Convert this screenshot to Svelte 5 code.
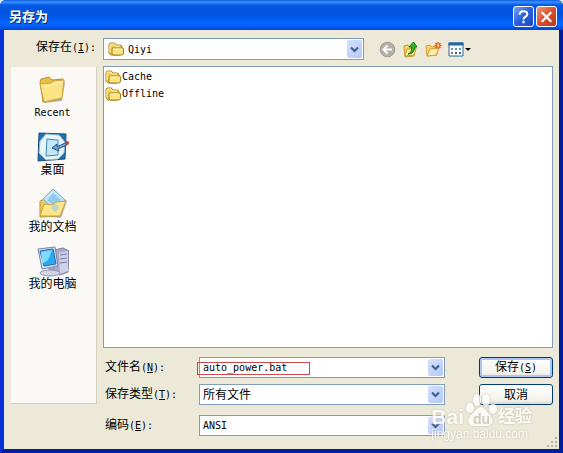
<script>
  let folders = ['Cache', 'Offline']
  let places = [
    { icon: 'recent', name: 'Recent', latin: true },
    { icon: 'desktop', name: '桌面' },
    { icon: 'documents', name: '我的文档' },
    { icon: 'computer', name: '我的电脑' }
  ]
  let filename = $state('auto_power.bat')
</script>

{#snippet folder()}
  <svg class="folder" width="16" height="16" viewBox="0 0 16 16" aria-hidden="true">
    <path d="M1 12V4q0-2 2-2h3q1 0 2 2h4q2 0 2 2v6l-2 2H3z" fill="#f0cd55" stroke="#a77d20" />
    <path d="M2 11V4q0-1 1-1h3l1 2h5" fill="none" stroke="#fff5b4" />
    <path d="M4 13V8q0-1 1-1h9q1.500 0 1.500 1v4q0 2-2 2H5z" fill="#fbe581" stroke="#a77d20" />
    <path d="M5 8h9" stroke="#fffac8" />
  </svg>
{/snippet}

{#snippet arrow()}
  <span class="arrow" aria-hidden="true">
    <svg width="9" height="7" viewBox="0 0 9 7"><path d="M1 1.500 4.500 5 8 1.500" fill="none" stroke="#42608f" stroke-width="2.200" /></svg>
  </span>
{/snippet}

<div class="window">
  <header>
    <h1>另存为</h1>
    <button class="caption help" aria-label="Help">
      <svg width="20" height="20" viewBox="0 0 20 20"><path d="M6 7.500Q6 4 10 4t4 3.200c0 2.800-4 2.600-4 5.300M10 14v2.500" fill="none" stroke="#fff" stroke-width="2.200" /></svg>
    </button>
    <button class="caption close" aria-label="Close">
      <svg width="20" height="20" viewBox="0 0 20 20"><path d="m5 5 10 10M15 5 5 15" stroke="#fff" stroke-width="2.300" /></svg>
    </button>
  </header>

  <main>
    <div class="lookin">
      <label for="where">保存在<span class="latin">(<u>I</u>):</span></label>
      <div class="combo">
        {@render folder()}
        <select id="where" class="latin"><option>Qiyi</option></select>
        {@render arrow()}
      </div>
      <div class="tools">
        <button aria-label="Back">
          <svg width="17" height="17" viewBox="0 0 17 17">
            <circle cx="8.500" cy="8.500" r="7.300" fill="#b2b1aa" stroke="#9c9b94" />
            <path d="M13 8.500H5M8.500 4.500l-4 4 4 4" fill="none" stroke="#fff" stroke-width="2" />
          </svg>
        </button>
        <button aria-label="Up one level">
          <svg width="17" height="17" viewBox="0 0 17 17">
            <path d="M2 5l4-1 1 2 6-1-1 10-9 1z" fill="#f5d967" stroke="#c59a2c" />
            <path d="m3 15 2-7 9-1-2 7z" fill="#fff09c" stroke="#c59a2c" />
            <path d="M6 13q4-1 3.500-7H7l4.500-5L15 6h-2.500q0 7-6.500 7z" fill="#37b42e" stroke="#167413" />
          </svg>
        </button>
        <button aria-label="New folder">
          <svg width="17" height="17" viewBox="0 0 17 17">
            <path d="M1 5l4-1 2 2 5-1v9L2 15z" fill="#f8d568" stroke="#d59e38" />
            <path d="m2 15 3-7 9-1-3 7z" fill="#fff0a6" stroke="#d59e38" />
            <path d="M13 1v7M9.500 4.500h7M10.500 2l5 5M15.500 2l-5 5" stroke="#e65a2c" stroke-width="1.300" />
            <circle cx="13" cy="4.500" r="1.300" fill="#ffd36a" />
          </svg>
        </button>
        <button aria-label="View menu">
          <svg width="24" height="17" viewBox="0 0 24 17">
            <path d="M1 2h14v13H1z" fill="#fff" stroke="#2365a5" />
            <path d="M.500 1.500h15v3H.500z" fill="#2365a5" />
            <path d="M3 7h2v2H3zM11 7h2v2h-2z" fill="#768fbc" />
            <path d="M7 7h2v2H7z" fill="#45a765" />
            <path d="M3 11h2v2H3z" fill="#b76161" />
            <path d="M7 11h2v2H7zM11 11h2v2h-2z" fill="#305ca0" />
            <path d="M17 7h6l-3 3z" fill="#000" />
          </svg>
        </button>
      </div>
    </div>

    <nav>
      {#each places as place}
        <button class="place">
          <svg width="32" height="32" viewBox="0 0 32 32" aria-hidden="true">
            {#if place.icon === 'recent'}
              <path d="m5 27 2 2 18-2 3-18-3-1z" fill="#77736b" opacity=".5" />
              <path d="m3 8 1-3 8-2 3 3 11-1 1 3-3 17-18 3z" fill="#e9bd47" stroke="#bd902c" />
              <path d="m3 10 11-1 3-2 10-1-2 18-18 4z" fill="#fbe486" stroke="#d1a33c" />
              <path d="m5 12 10-1 3-2 7-1" fill="none" stroke="#fff7c7" />
            {:else if place.icon === 'desktop'}
              <path d="m2 2 27 1-1 25-27 2z" fill="#246fae" stroke="#174b82" />
              <path d="m9 3 13 1 6 7-1 11-6 6-12 1-7-7 1-12z" fill="#e9f4f7" stroke="#88b9d8" />
              <path d="m10 8 11 1v15l-12 1z" fill="#c4e7fa" stroke="#3989bf" />
              <path d="m15 17 5-4v3l8-4 2 2-9 4 1 2z" fill="#68a8dc" stroke="#28588a" />
              <circle cx="30" cy="12" r="2" fill="#b74340" />
            {:else if place.icon === 'documents'}
              <path d="m5 28 19 2 6-17-3-2z" fill="#79756c" opacity=".5" />
              <path d="m3 13 7-3 14 2-1 16-20 1z" fill="#eeca59" stroke="#bc9330" />
              <path d="m16 1 12 11-9 11L6 11z" fill="#c5e6f9" stroke="#76abd0" />
              <path d="m16 5 8 7-6 7-8-7z" fill="#92c8eb" />
              <path d="m3 28 4-12 8 1 4-3 10-1-6 15z" fill="#ffe68b" stroke="#c99f3b" />
              <path d="m14 20 4-5 4 4-3 6z" fill="#9fd0dd" opacity=".7" />
            {:else}
              <path d="m17 5 9-2 6 3-1 21-8 3-7-3z" fill="#a9abc9" stroke="#7c7ea2" />
              <path d="m22 8 9-2v20l-8 3z" fill="#cdd1e8" />
              <path d="m23 10 7-1m-7 5 7-1m-7 5 7-1" stroke="#777ca3" />
              <path d="m1 4 17-2 3 19-16 3z" fill="#d7dcec" stroke="#7b84ac" />
              <path d="m3 6 13-2 3 15-12 2z" fill="#2baaf0" stroke="#266ca9" />
              <path d="m4 7 11-2-4 10-6 4z" fill="#80dbff" />
              <path d="m11 23 5-1 1 4h-5z" fill="#9da4c4" />
              <ellipse cx="13" cy="28" rx="10" ry="3" fill="#d2d5e6" stroke="#9095b6" />
            {/if}
          </svg>
          <span class:latin={place.latin}>{place.name}</span>
        </button>
      {/each}
    </nav>

    <section>
      <ul class="files latin">
        {#each folders as name}
          <li>{@render folder()}{name}</li>
        {/each}
      </ul>

      <form onsubmit={(e) => e.preventDefault()}>
        <label for="filename">文件名<span class="latin"> (<u>N</u>):</span></label>
        <div class="combo marked">
          <input id="filename" class="latin" bind:value={filename} />
          {@render arrow()}
        </div>
        <button class="action default">保存<span class="latin">(<u>S</u>)</span></button>

        <label for="type">保存类型<span class="latin">(<u>T</u>):</span></label>
        <div class="combo">
          <select id="type"><option>所有文件</option></select>
          {@render arrow()}
        </div>
        <button class="action" type="button">取消</button>

        <label for="encoding" class="last">编码<span class="latin"> (<u>E</u>):</span></label>
        <div class="combo last">
          <select id="encoding" class="latin"><option>ANSI</option></select>
          {@render arrow()}
        </div>
      </form>
    </section>
  </main>

  <svg class="grip" width="12" height="12" viewBox="0 0 12 12" aria-hidden="true">
    <path d="M9 1h2v2H9zM5 5h2v2H5zM9 5h2v2H9zM1 9h2v2H1zM5 9h2v2H5zM9 9h2v2H9z" fill="#b8b4a3" />
  </svg>

  <div class="watermark">
    <div class="brand">
      <span>Bai</span>
      <span class="paw">
        <svg width="32" height="34" viewBox="0 0 32 34" aria-hidden="true">
          <ellipse cx="5" cy="15" rx="4" ry="5" />
          <ellipse cx="12" cy="7" rx="4" ry="6" />
          <ellipse cx="21" cy="7" rx="4" ry="6" />
          <ellipse cx="28" cy="16" rx="4" ry="5" />
          <path d="M16 14c4 0 5 4 8 7 6 5 4 12-2 12H9c-6 0-8-7-2-12 4-3 5-7 9-7z" />
        </svg>
        <b>du</b>
      </span>
      <span class="cn">经验</span>
    </div>
    <div class="site">jingyan.baidu.com</div>
  </div>
</div>

<style>
  :global(body) {
    margin: 0;
    background: #d5e8fb;
  }
  .window {
    position: relative;
    box-sizing: border-box;
    min-height: 100vh;
    display: flex;
    flex-direction: column;
    border: solid #0831d9;
    border-width: 0 4px 4px;
    border-color: #0831d9 #001ea0 #001ea0 #0831d9;
    border-radius: 6px 6px 0 0;
    background: #ece9d8;
    color: #000;
    font-family: "Liberation Sans", "Noto Sans CJK SC", sans-serif;
    font-size: 12px;
    line-height: 14px;
  }
  .latin {
    font-family: "DejaVu Sans Mono", "Noto Sans CJK SC", monospace;
    font-size: 10px;
  }
  header {
    display: flex;
    align-items: center;
    gap: 2px;
    height: 30px;
    margin: 0 -4px;
    padding: 3px 6px 0 9px;
    box-sizing: border-box;
    border-radius: 6px 6px 0 0;
    background: linear-gradient(#0a5be0 0, #3c91fb 2px, #2582fa 3px, #0458e4 5px, #0054e0 14px, #0564fa 23px, #0261fb 26px, #0144cf 30px);
  }
  h1 {
    flex: 1;
    margin: 0;
    color: #fff;
    font-size: 13px;
    line-height: 16px;
    text-shadow: 1px 1px #0a2c7c;
  }
  button {
    padding: 0;
    border: 0;
    background: none;
    color: inherit;
    font: inherit;
  }
  .caption {
    display: flex;
    align-items: center;
    justify-content: center;
    width: 21px;
    height: 21px;
    border: 1px solid #fff;
    border-radius: 3px;
  }
  .help {
    background: linear-gradient(135deg, #7aa2f2, #2a5fdc 50%, #1d48c5);
  }
  .close {
    background: linear-gradient(135deg, #eb9980, #d94f2b 50%, #b93618);
  }
  main {
    flex: 1;
    display: grid;
    grid-template-columns: 86px 1fr;
    grid-template-rows: 22px 1fr;
    gap: 6px;
    padding: 8px 6px 13px 7px;
  }
  .lookin {
    grid-column: 1 / 3;
    display: grid;
    grid-template-columns: 67px 58fr 42fr;
    padding-left: 25px;
  }
  .lookin label {
    line-height: 18px;
  }
  .combo {
    position: relative;
    display: flex;
    align-items: center;
    box-sizing: border-box;
    height: 21px;
    padding: 1px;
    border: 1px solid #7f9db9;
    background: #fff;
  }
  .lookin .combo {
    height: 22px;
    padding-left: 4px;
  }
  .lookin select {
    padding-left: 4px;
  }
  .folder {
    flex: none;
  }
  select,
  input {
    appearance: none;
    flex: 1;
    min-width: 0;
    height: 17px;
    margin: 0;
    padding: 0 20px 0 2px;
    border: 0;
    outline: 0;
    background: none;
    color: inherit;
    font: inherit;
  }
  select.latin,
  input.latin {
    font-family: "DejaVu Sans Mono", monospace;
    font-size: 10px;
    line-height: 17px;
  }
  .arrow {
    position: absolute;
    top: 1px;
    right: 1px;
    bottom: 1px;
    display: flex;
    align-items: center;
    justify-content: center;
    width: 15px;
    border-radius: 2px;
    background: linear-gradient(135deg, #d5e0fd, #b5c9f8);
    pointer-events: none;
  }
  .tools {
    display: flex;
    align-items: center;
    gap: 6px;
    padding-left: 15px;
  }
  .tools button {
    display: flex;
  }
  nav {
    display: flex;
    flex-direction: column;
    gap: 11px;
    margin: 1px 0 32px;
    padding: 7px 2px 0 0;
    box-sizing: border-box;
    border-right: 1px solid #d2cfbf;
    border-bottom: 1px solid #d2cfbf;
    background: #faf9f5;
  }
  .place {
    display: flex;
    flex-direction: column;
    align-items: center;
    line-height: 14px;
  }
  section {
    display: flex;
    flex-direction: column;
  }
  .files {
    flex: 1;
    margin: 0;
    padding: 1px;
    border: 1px solid #7f9db9;
    background: #fff;
    list-style: none;
  }
  .files li {
    display: flex;
    align-items: center;
    gap: 1px;
    height: 17px;
  }
  form {
    display: grid;
    grid-template-columns: 96px 1fr 74px;
    align-items: center;
    row-gap: 6px;
    padding-top: 9px;
  }
  form label {
    padding-left: 2px;
  }
  form .combo {
    margin-right: 34px;
  }
  .last {
    margin-top: 4px;
  }
  .marked input {
    position: relative;
    z-index: 1;
  }
  .marked::after {
    content: "";
    position: absolute;
    top: 4px;
    left: -3px;
    width: 111px;
    height: 11px;
    border: 1px solid #c9494c;
    pointer-events: none;
  }
  .action {
    height: 21px;
    border: 1px solid #003c74;
    border-radius: 3px;
    background: linear-gradient(#fff, #f3f2ec 80%, #dcd8cb);
  }
  .default {
    box-shadow: inset 0 0 0 2px #adc5f2;
  }
  .grip {
    position: absolute;
    right: 1px;
    bottom: 1px;
  }
  .watermark {
    position: absolute;
    right: 27px;
    bottom: 7px;
    color: #fff;
    opacity: 0.8;
    pointer-events: none;
    filter: drop-shadow(0 0 1px #b5b2a6);
  }
  .brand {
    display: flex;
    align-items: flex-end;
    font-size: 21px;
    font-weight: bold;
    line-height: 20px;
  }
  .paw {
    position: relative;
    display: flex;
    margin: 0 1px;
    fill: #fff;
  }
  .paw b {
    position: absolute;
    left: 8px;
    bottom: 1px;
    color: #c8c5b9;
    font-size: 14px;
    line-height: 14px;
  }
  .cn {
    font-size: 17px;
  }
  .site {
    font-size: 12px;
    line-height: 15px;
  }
</style>
